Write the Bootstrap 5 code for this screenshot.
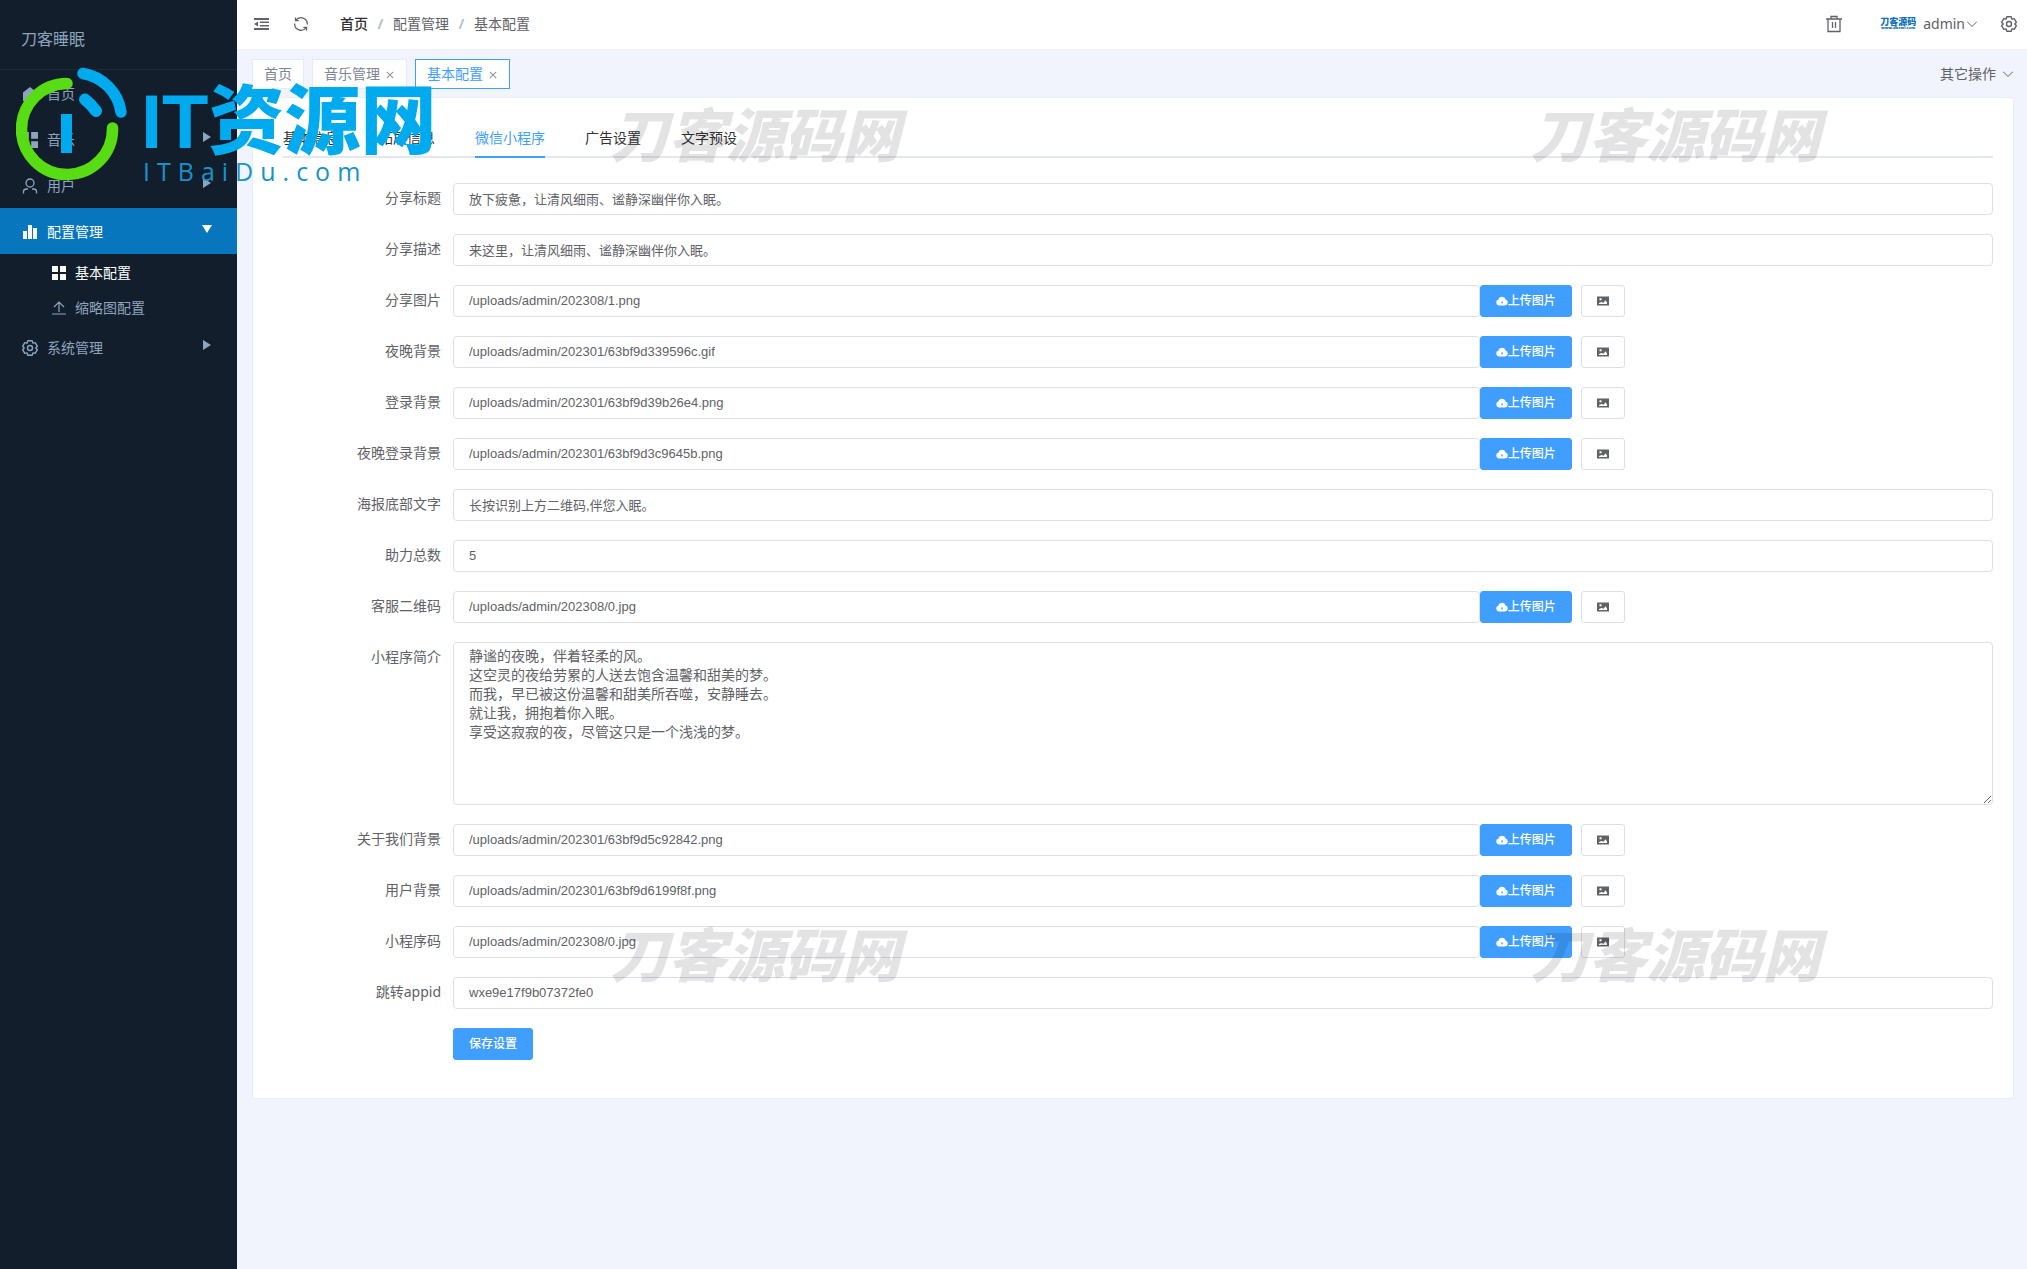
<!DOCTYPE html>
<html lang="zh-CN">
<head>
<meta charset="utf-8">
<meta name="viewport" content="width=device-width, initial-scale=1">
<title>基本配置</title>
<link href="https://cdn.jsdelivr.net/npm/bootstrap@5.3.0/dist/css/bootstrap.min.css" rel="stylesheet">
<style>
body{font-family:"Noto Sans","Noto Sans CJK SC",sans-serif;font-size:14px;line-height:20px;color:#606266;background:#f1f4fd}
a{color:inherit;text-decoration:none}
button{font-family:inherit}
.app-shell{min-height:100vh}
.side-panel{width:237px;background:#131e2d;color:#8ea4bd}
.side-title{height:70px;padding:9px 21px 0;font-size:16px;border-bottom:1px solid #1d2a3a}
.menu-link{height:46px;padding:2px 25px 0 22px}
.menu-link svg.menu-ico{width:16px;height:16px;margin-right:9px}
.menu-link .caret-ico{width:10px;height:12px;margin-left:auto;margin-bottom:6px}
.menu-link.is-open{background:#0776bc;color:#fff}
.sub-link{height:35px;padding:2px 0 0 52px}
.sub-link svg{width:14px;height:14px;margin-right:9px}
.sub-link.is-current{color:#fff}
.top-bar{height:50px;padding:0 10px 2px 16px;background:#fff;border-bottom:1px solid #eef0f6}
.plain-btn{padding:0;border:0;background:none;color:inherit;line-height:20px}
.crumbs{gap:9px;margin-left:31px}
.crumbs .sep{width:7px;text-align:center;color:#b4bccc;font-weight:700}
.crumbs .home{color:#303133;font-weight:500}
.user-btn{margin-left:38px}
.user-btn .user-name{margin:0 2px 0 7px}
.set-btn{margin-left:24px}
.brand-mark{width:36px;color:#0e6fb8;font-size:9px;line-height:9px;font-weight:900}
.brand-mark small{display:block;font-size:4px;line-height:4px}
.tab-strip{height:47px;padding:1px 14px 0 15px}
.page-tab{height:30px;padding:0 11px;border:1px solid #e6ebf5;background:#fff;color:#7d8496}
.page-tab.is-current{border-color:#409eff;color:#409eff}
.page-tab svg{width:8px;height:8px;margin:1px 1px 0 6px;color:#909399}
.other-btn svg{margin-left:7px}
.main-card{margin:0 13px 0 15px;padding:20px 20px 19px 30px;background:#fff;border:1px solid #e9edf5;border-radius:4px}
.form-tabs{gap:40px;height:40px;margin-bottom:25px;border-bottom:2px solid #e4e7ed;color:#303133}
.form-tabs a{height:40px;line-height:40px}
.form-tabs a.is-current{color:#409eff;border-bottom:2px solid #409eff}
.form-line{margin-bottom:19px}
.form-line label,.label-space{flex:0 0 170px;padding-right:12px;text-align:right;line-height:30px}
.field-box{height:32px;padding:0 15px 2px;border:1px solid #dcdfe6;border-radius:4px;font-family:"Liberation Sans","Noto Sans CJK SC",sans-serif;font-size:13px;line-height:28px;color:#606266}
textarea.field-box{height:163px;padding:4px 15px;font-size:14px;line-height:19px;resize:vertical}
.act-btn{height:32px;padding:0 15px;border:1px solid #409eff;border-radius:3px;background:#409eff;color:#fff;font-size:12px;font-weight:500;line-height:30px}
.act-btn svg{width:12px;height:12px;vertical-align:-2px}
.pic-btn{background:#fff;border-color:#dcdfe6;color:#606266;margin-left:9px}
.stamp{position:absolute;z-index:5;font-family:"Noto Sans CJK SC",sans-serif;font-size:58px;line-height:58px;font-weight:900;font-style:italic;color:rgba(0,0,0,.11);pointer-events:none;white-space:nowrap}
.stamp-l{left:30.1%}.stamp-r{left:75.5%}
.stamp-t{top:103px}.stamp-b{top:923px}
.site-logo{position:absolute;z-index:6;left:16px;top:66px;color:#00aaee;pointer-events:none}
.logo-ring{width:112px;height:116px}
.logo-words{padding:18px 0 0 13px}
.logo-name{height:72px;font-size:76px;line-height:76px;font-weight:900;font-family:"Liberation Sans","Noto Sans CJK SC",sans-serif;white-space:nowrap}
.logo-host{padding-left:2px;font-size:25px;line-height:30px;font-weight:400;letter-spacing:7px;color:#1793c9;font-family:"Open Sans","Noto Sans",sans-serif}
</style>
</head>
<body>
<svg class="d-none" aria-hidden="true">
<symbol id="i-home" viewBox="0 0 16 16"><path fill="currentColor" d="M8 1 15 6.500V15h-5v-5H6v5H1V6.500z"/></symbol>
<symbol id="i-grid" viewBox="0 0 14 14"><path fill="currentColor" d="M0 0h6v6H0zM8 0h6v6H8zM0 8h6v6H0zM8 8h6v6H8z"/></symbol>
<symbol id="i-user" viewBox="0 0 16 16"><g fill="none" stroke="currentColor" stroke-width="1.300"><circle cx="8" cy="5" r="4"/><path d="M1.500 15.500v-2q0-2.500 3-2.500H6M14.500 15.500v-2q0-2.500-3-2.500H10"/></g></symbol>
<symbol id="i-bars" viewBox="0 0 16 16"><path fill="currentColor" d="M1 7h4v8H1zM6 1h4v14H6zM11 4h4v11h-4z"/></symbol>
<symbol id="i-up" viewBox="0 0 14 14"><path fill="none" stroke="currentColor" stroke-width="1.200" d="M0 13h14M7 11V1M2 6l5-5 5 5"/></symbol>
<symbol id="i-gear" viewBox="0 0 16 16"><g fill="none" stroke="currentColor" stroke-width="1.400" stroke-linejoin="round"><path d="M5.800.8h4.400l.7 2.300 2.300-.5 2.200 3.700L13.800 8l1.600 1.700-2.200 3.700-2.300-.5-.7 2.300H5.800l-.7-2.300-2.300.5L.6 9.700 2.200 8 .6 6.300l2.200-3.700 2.300.5z"/><circle cx="8" cy="8" r="2.500"/></g></symbol>
<symbol id="i-right" viewBox="0 0 10 12"><path fill="currentColor" d="M1 1l8 5-8 5z"/></symbol>
<symbol id="i-down" viewBox="0 0 10 12"><path fill="currentColor" d="M0 2h10L5 10z"/></symbol>
<symbol id="i-x" viewBox="0 0 10 10"><path stroke="currentColor" stroke-width="1.300" d="M1 1l8 8M9 1 1 9"/></symbol>
<symbol id="i-chev" viewBox="0 0 10 10"><path fill="none" stroke="currentColor" d="M0 2.500l5 5 5-5"/></symbol>
<symbol id="i-cloud" viewBox="0 0 12 12"><path fill="currentColor" fill-rule="evenodd" d="M3 10.500A3 3 0 0 1 2.500 4.600 3.600 3.600 0 0 1 9.500 4.600 3 3 0 0 1 9 10.500zM6 6 4.800 7.400h.7v1.200h1V7.400h.7z"/></symbol>
<symbol id="i-pic" viewBox="0 0 12 12"><path fill="currentColor" fill-rule="evenodd" d="M0 1.500h12v9H0zM2.500 3.300v2h2v-2zM2 9h8V7.500L8.500 5.300 6.500 7.800 4.500 7 2 8z"/></symbol>
</svg>

<div class="app-shell d-flex position-relative overflow-hidden">
<aside class="side-panel flex-shrink-0">
  <div class="side-title d-flex align-items-center">刀客睡眠</div>
  <nav>
    <a href="#" class="menu-link d-flex align-items-center"><svg class="menu-ico"><use href="#i-home"/></svg>首页</a>
    <a href="#" class="menu-link d-flex align-items-center"><svg class="menu-ico"><use href="#i-grid"/></svg>音乐<svg class="caret-ico"><use href="#i-right"/></svg></a>
    <a href="#" class="menu-link d-flex align-items-center"><svg class="menu-ico"><use href="#i-user"/></svg>用户<svg class="caret-ico"><use href="#i-right"/></svg></a>
    <a href="#" class="menu-link is-open d-flex align-items-center"><svg class="menu-ico"><use href="#i-bars"/></svg>配置管理<svg class="caret-ico"><use href="#i-down"/></svg></a>
    <a href="#" class="sub-link is-current d-flex align-items-center"><svg><use href="#i-grid"/></svg>基本配置</a>
    <a href="#" class="sub-link d-flex align-items-center"><svg><use href="#i-up"/></svg>缩略图配置</a>
    <a href="#" class="menu-link d-flex align-items-center"><svg class="menu-ico"><use href="#i-gear"/></svg>系统管理<svg class="caret-ico"><use href="#i-right"/></svg></a>
  </nav>
</aside>

<div class="flex-grow-1">
  <header class="top-bar d-flex align-items-center">
    <button class="plain-btn d-flex" aria-label="折叠菜单"><svg width="16" height="14" viewBox="0 0 16 14"><path fill="currentColor" d="M1 1h15v2H1zM1 11h15v2H1zM7 4.500h9v1.500H7zM7 8h9v1.500H7zM1 7l4-2.500v5z"/></svg></button>
    <button class="plain-btn d-flex ms-4" aria-label="刷新"><svg width="16" height="16" viewBox="0 0 16 16"><g fill="none" stroke="currentColor" stroke-width="1.300"><path d="M2.500 1.500v3.200h3.200M2.800 4.500A6.300 6.300 0 0 1 14.300 8.500M13.500 14.500v-3.200h-3.200M13.200 11.500A6.300 6.300 0 0 1 1.700 7.500"/></g></svg></button>
    <nav class="crumbs d-flex" aria-label="路径"><a href="#" class="home">首页</a><span class="sep">/</span><span>配置管理</span><span class="sep">/</span><span>基本配置</span></nav>
    <button class="plain-btn d-flex ms-auto" aria-label="清除缓存"><svg width="16" height="18" viewBox="0 0 16 18"><path fill="none" stroke="currentColor" stroke-width="1.300" d="M0 4h16M5 4V1.500h6V4M2 4v12.500h12V4M6.500 7v6M9.500 7v6"/></svg></button>
    <button class="plain-btn user-btn d-flex align-items-center"><span class="brand-mark text-center">刀客源码<small>www.dkewl.com</small></span><span class="user-name">admin</span><svg width="10" height="10"><use href="#i-chev"/></svg></button>
    <button class="plain-btn set-btn d-flex" aria-label="设置"><svg width="16" height="16"><use href="#i-gear"/></svg></button>
  </header>
  <div class="tab-strip d-flex align-items-center">
    <div class="d-flex gap-2 me-auto">
      <a href="#" class="page-tab d-flex align-items-center">首页</a>
      <a href="#" class="page-tab d-flex align-items-center">音乐管理<svg><use href="#i-x"/></svg></a>
      <a href="#" class="page-tab is-current d-flex align-items-center">基本配置<svg><use href="#i-x"/></svg></a>
    </div>
    <button class="plain-btn other-btn d-flex align-items-center">其它操作<svg width="10" height="10"><use href="#i-chev"/></svg></button>
  </div>

  <main class="main-card">
    <nav class="form-tabs d-flex"><a href="#">基本信息</a><a href="#">拓展信息</a><a href="#" class="is-current">微信小程序</a><a href="#">广告设置</a><a href="#">文字预设</a></nav>
    <form>
      <div class="form-line d-flex"><label for="f1">分享标题</label><div class="flex-grow-1 d-flex"><input id="f1" class="field-box w-100" value="放下疲惫，让清风细雨、谧静深幽伴你入眠。"></div></div>
      <div class="form-line d-flex"><label for="f2">分享描述</label><div class="flex-grow-1 d-flex"><input id="f2" class="field-box w-100" value="来这里，让清风细雨、谧静深幽伴你入眠。"></div></div>
      <div class="form-line d-flex"><label for="f3">分享图片</label><div class="flex-grow-1 d-flex"><input id="f3" class="field-box col-8" value="/uploads/admin/202308/1.png"><button type="button" class="act-btn"><svg><use href="#i-cloud"/></svg>上传图片</button><button type="button" class="act-btn pic-btn" aria-label="选择图片"><svg><use href="#i-pic"/></svg></button></div></div>
      <div class="form-line d-flex"><label for="f4">夜晚背景</label><div class="flex-grow-1 d-flex"><input id="f4" class="field-box col-8" value="/uploads/admin/202301/63bf9d339596c.gif"><button type="button" class="act-btn"><svg><use href="#i-cloud"/></svg>上传图片</button><button type="button" class="act-btn pic-btn" aria-label="选择图片"><svg><use href="#i-pic"/></svg></button></div></div>
      <div class="form-line d-flex"><label for="f5">登录背景</label><div class="flex-grow-1 d-flex"><input id="f5" class="field-box col-8" value="/uploads/admin/202301/63bf9d39b26e4.png"><button type="button" class="act-btn"><svg><use href="#i-cloud"/></svg>上传图片</button><button type="button" class="act-btn pic-btn" aria-label="选择图片"><svg><use href="#i-pic"/></svg></button></div></div>
      <div class="form-line d-flex"><label for="f6">夜晚登录背景</label><div class="flex-grow-1 d-flex"><input id="f6" class="field-box col-8" value="/uploads/admin/202301/63bf9d3c9645b.png"><button type="button" class="act-btn"><svg><use href="#i-cloud"/></svg>上传图片</button><button type="button" class="act-btn pic-btn" aria-label="选择图片"><svg><use href="#i-pic"/></svg></button></div></div>
      <div class="form-line d-flex"><label for="f7">海报底部文字</label><div class="flex-grow-1 d-flex"><input id="f7" class="field-box w-100" value="长按识别上方二维码,伴您入眠。"></div></div>
      <div class="form-line d-flex"><label for="f8">助力总数</label><div class="flex-grow-1 d-flex"><input id="f8" class="field-box w-100" value="5"></div></div>
      <div class="form-line d-flex"><label for="f9">客服二维码</label><div class="flex-grow-1 d-flex"><input id="f9" class="field-box col-8" value="/uploads/admin/202308/0.jpg"><button type="button" class="act-btn"><svg><use href="#i-cloud"/></svg>上传图片</button><button type="button" class="act-btn pic-btn" aria-label="选择图片"><svg><use href="#i-pic"/></svg></button></div></div>
      <div class="form-line d-flex"><label for="f10">小程序简介</label><div class="flex-grow-1 d-flex"><textarea id="f10" class="field-box w-100">静谧的夜晚，伴着轻柔的风。
这空灵的夜给劳累的人送去饱含温馨和甜美的梦。
而我，早已被这份温馨和甜美所吞噬，安静睡去。
就让我，拥抱着你入眠。
享受这寂寂的夜，尽管这只是一个浅浅的梦。</textarea></div></div>
      <div class="form-line d-flex"><label for="f11">关于我们背景</label><div class="flex-grow-1 d-flex"><input id="f11" class="field-box col-8" value="/uploads/admin/202301/63bf9d5c92842.png"><button type="button" class="act-btn"><svg><use href="#i-cloud"/></svg>上传图片</button><button type="button" class="act-btn pic-btn" aria-label="选择图片"><svg><use href="#i-pic"/></svg></button></div></div>
      <div class="form-line d-flex"><label for="f12">用户背景</label><div class="flex-grow-1 d-flex"><input id="f12" class="field-box col-8" value="/uploads/admin/202301/63bf9d6199f8f.png"><button type="button" class="act-btn"><svg><use href="#i-cloud"/></svg>上传图片</button><button type="button" class="act-btn pic-btn" aria-label="选择图片"><svg><use href="#i-pic"/></svg></button></div></div>
      <div class="form-line d-flex"><label for="f13">小程序码</label><div class="flex-grow-1 d-flex"><input id="f13" class="field-box col-8" value="/uploads/admin/202308/0.jpg"><button type="button" class="act-btn"><svg><use href="#i-cloud"/></svg>上传图片</button><button type="button" class="act-btn pic-btn" aria-label="选择图片"><svg><use href="#i-pic"/></svg></button></div></div>
      <div class="form-line d-flex"><label for="f14">跳转appid</label><div class="flex-grow-1 d-flex"><input id="f14" class="field-box w-100" value="wxe9e17f9b07372fe0"></div></div>
      <div class="form-line d-flex"><div class="label-space"></div><button type="button" class="act-btn">保存设置</button></div>
    </form>
  </main>
</div>

<div class="stamp stamp-l stamp-t">刀客源码网</div>
<div class="stamp stamp-r stamp-t">刀客源码网</div>
<div class="stamp stamp-l stamp-b">刀客源码网</div>
<div class="stamp stamp-r stamp-b">刀客源码网</div>

<div class="site-logo d-flex">
  <svg class="logo-ring flex-shrink-0" viewBox="16 66 112 116"><g fill="none" stroke-width="11.500" stroke-linecap="round"><path stroke="#58dd14" d="M67 83.500A45.500 45.500 0 1 0 112.500 128"/><path stroke="#00aaee" d="M83 73.500A46 46 0 0 1 121 112"/><path stroke="#00aaee" stroke-width="12" d="M85 99.500Q91 104 96 111"/></g><path fill="#00aaee" d="M61 114h11v39H61z"/></svg>
  <div class="logo-words"><div class="logo-name">IT资源网</div><div class="logo-host">ITBaiDu.com</div></div>
</div>
</div>
<script src="https://cdn.jsdelivr.net/npm/bootstrap@5.3.0/dist/js/bootstrap.bundle.min.js"></script>
</body>
</html>
